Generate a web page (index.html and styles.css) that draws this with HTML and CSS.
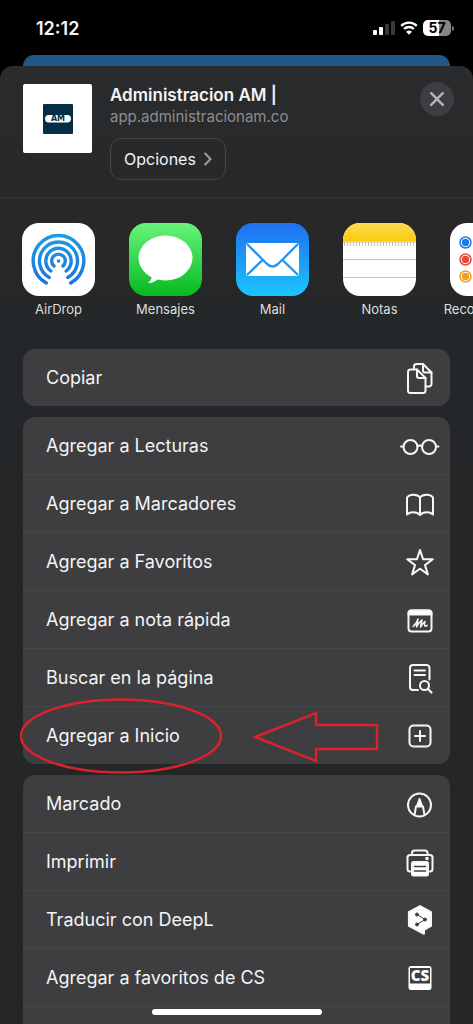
FILE: index.html
```html
<!DOCTYPE html>
<html lang="es">
<head>
    <meta charset="UTF-8">
    <meta name="viewport" content="width=device-width, initial-scale=1.0">
    <title>Compartir</title>
    <link rel="stylesheet" href="styles.css">
</head>
<body>
    <div class="status-bar">
        <span class="time">12:12</span>
        <div class="status-icons">
            <svg class="signal" width="22" height="14" viewBox="0 0 22 14">
                <rect x="0" y="9" width="4" height="5" rx="1" fill="#fff"/>
                <rect x="6" y="6" width="4" height="8" rx="1" fill="#fff"/>
                <rect x="12" y="3" width="4" height="11" rx="1" fill="#3a3a3a"/>
                <rect x="18" y="0" width="4" height="14" rx="1" fill="#3a3a3a"/>
            </svg>
            <svg class="wifi" width="18" height="14" viewBox="0 0 18 14">
                <path d="M1.2 4.8a11.2 11.2 0 0 1 15.6 0M4.1 8a7 7 0 0 1 9.8 0" fill="none" stroke="#fff" stroke-width="2.4"/>
                <path d="M9 13.8l-2.9-3a4.2 4.2 0 0 1 5.8 0z" fill="#fff"/>
            </svg>
            <div class="battery"><span class="battery-level">57</span></div>
        </div>
    </div>

    <div class="page-behind"></div>

    <main class="sheet">
        <header class="sheet-header">
            <div class="site-icon">
                <svg width="30" height="30" viewBox="0 0 30 30">
                    <rect width="30" height="30" rx="1" fill="#062f45"/>
                    <rect x="2" y="11" width="26" height="7.500" rx="3.700" fill="#fff"/>
                    <text x="15" y="17.300" text-anchor="middle" class="logo-text">AM</text>
                </svg>
            </div>
            <div class="site-info">
                <h1>Administracion AM |</h1>
                <p>app.administracionam.co</p>
                <button class="options" type="button">
                    Opciones
                    <svg width="8" height="14" viewBox="0 0 8 14"><path d="M1.2 1.5L6.5 7l-5.3 5.5" fill="none" stroke="#98989c" stroke-width="2.2" stroke-linecap="round" stroke-linejoin="round"/></svg>
                </button>
            </div>
            <button class="close" type="button" aria-label="Cerrar">
                <svg width="14" height="14" viewBox="0 0 14 14"><path d="M1.2 1.2l11.6 11.6M12.8 1.2L1.2 12.8" stroke="#b4b4b8" stroke-width="2.4" stroke-linecap="round"/></svg>
            </button>
        </header>

        <!-- Apps -->
        <div class="apps">
            <button class="app" type="button">
                <svg class="app-icon" viewBox="0 0 73 73">
                    <defs>
                        <linearGradient id="airdrop" x1="0" y1="11" x2="0" y2="62" gradientUnits="userSpaceOnUse">
                            <stop offset="0" stop-color="#1a9fe3"/>
                            <stop offset="1" stop-color="#2070e0"/>
                        </linearGradient>
                    </defs>
                    <rect width="73" height="73" rx="17" fill="#fff"/>
                    <g fill="none" stroke="url(#airdrop)" stroke-width="3.400" stroke-linecap="round">
                        <path d="M24.3 60a25.3 25.3 0 1 1 24.4 0"/>
                        <path d="M27.2 54.5a19 19 0 1 1 18.6 0"/>
                        <path d="M28.8 48a12.7 12.7 0 1 1 15.4 0"/>
                        <path d="M32 43a6.8 6.8 0 1 1 9 0"/>
                    </g>
                    <circle cx="36.500" cy="38" r="1.800" fill="#1d88e2"/>
                </svg>
                <span>AirDrop</span>
            </button>
            <button class="app" type="button">
                <svg class="app-icon" viewBox="0 0 73 73">
                    <defs>
                        <linearGradient id="messages" x1="0" y1="0" x2="0" y2="1">
                            <stop offset="0" stop-color="#68f47c"/>
                            <stop offset="1" stop-color="#06b91f"/>
                        </linearGradient>
                    </defs>
                    <rect width="73" height="73" rx="17" fill="url(#messages)"/>
                    <ellipse cx="36.500" cy="35" rx="27" ry="22.500" fill="#fff"/>
                    <path d="M23 52c0 3.500-1.500 6-4 8 4.500 0 8.500-2 11-5z" fill="#fff"/>
                </svg>
                <span>Mensajes</span>
            </button>
            <button class="app" type="button">
                <svg class="app-icon" viewBox="0 0 73 73">
                    <defs>
                        <linearGradient id="mail" x1="0" y1="0" x2="0" y2="1">
                            <stop offset="0" stop-color="#216ff1"/>
                            <stop offset="1" stop-color="#1bc5fb"/>
                        </linearGradient>
                    </defs>
                    <rect width="73" height="73" rx="17" fill="url(#mail)"/>
                    <rect x="10" y="20" width="53" height="33" rx="2.500" fill="#fff"/>
                    <path d="M11 21l20 20q5.500 5 11 0l20-20M11 52l16-15.500M62 52L46 36.500" fill="none" stroke="#2a94f0" stroke-width="2.400"/>
                </svg>
                <span>Mail</span>
            </button>
            <button class="app" type="button">
                <svg class="app-icon" viewBox="0 0 73 73">
                    <defs>
                        <linearGradient id="notes" x1="0" y1="0" x2="0" y2="1">
                            <stop offset="0" stop-color="#fddd52"/>
                            <stop offset="1" stop-color="#fcc90c"/>
                        </linearGradient>
                    </defs>
                    <rect width="73" height="73" rx="17" fill="#fff"/>
                    <path d="M0 18v-1A17 17 0 0 1 17 0h39a17 17 0 0 1 17 17v1z" fill="url(#notes)"/>
                    <path d="M0 19h73" stroke="#b9a877"/>
                    <path d="M1 21.500h71" stroke="#aaa" stroke-width="2" stroke-dasharray="1 2"/>
                    <path d="M0 36.500h73M0 54.500h73" stroke="#c4c4c6"/>
                </svg>
                <span>Notas</span>
            </button>
            <button class="app" type="button">
                <svg class="app-icon" viewBox="0 0 73 73">
                    <rect width="73" height="73" rx="17" fill="#fff"/>
                    <g fill="none" stroke-width="1.500">
                        <circle cx="15.500" cy="19.500" r="5.500" stroke="#1a7be6"/>
                        <circle cx="15.500" cy="36.500" r="5.500" stroke="#e8483f"/>
                        <circle cx="15.500" cy="53.500" r="5.500" stroke="#f19d1f"/>
                    </g>
                    <circle cx="15.500" cy="19.500" r="3.700" fill="#1a7be6"/>
                    <circle cx="15.500" cy="36.500" r="3.700" fill="#e8483f"/>
                    <circle cx="15.500" cy="53.500" r="3.700" fill="#f19d1f"/>
                    <path d="M27 19.500h38M27 36.500h38M27 53.500h38" stroke="#d0d0d2"/>
                </svg>
                <span>Recordatorios</span>
            </button>
        </div>

        <!-- Actions -->
        <div class="actions">
            <ul class="group">
                <li>
                    <button class="row" type="button">Copiar
                        <svg class="icon" viewBox="0 0 40 40">
                            <path d="M14 11V8.500a2.500 2.500 0 0 1 2.500-2.500H23l8.500 8.500V26a2.500 2.500 0 0 1-2.500 2.500h-3"/>
                            <path d="M23 6v6.500a2 2 0 0 0 2 2h6.500"/>
                            <path d="M10.500 11.500H17l8.500 8.500v12.500A2.500 2.500 0 0 1 23 35H10.500A2.500 2.500 0 0 1 8 32.500V14a2.500 2.500 0 0 1 2.500-2.500z"/>
                            <path d="M17 11.500V18a2 2 0 0 0 2 2h6.500"/>
                        </svg>
                    </button>
                </li>
            </ul>

            <ul class="group">
                <li>
                    <button class="row" type="button">Agregar a Lecturas
                        <svg class="icon" viewBox="0 0 40 40">
                            <circle cx="10.500" cy="21" r="7"/>
                            <circle cx="29" cy="21" r="7"/>
                            <path d="M1 20.500h2.500M36 20.500h2.500M17.300 20q2.500-1.200 5 0"/>
                        </svg>
                    </button>
                </li>
                <li>
                    <button class="row" type="button">Agregar a Marcadores
                        <svg class="icon" viewBox="0 0 40 40">
                            <path d="M20 13.500C17.500 10 10 9.500 7 13.500v17c3-3 10-3 13 .5 3-3.500 10-3.500 13-.5v-17c-3-4-10.500-3.500-13 0zM20 13.500V31"/>
                        </svg>
                    </button>
                </li>
                <li>
                    <button class="row" type="button">Agregar a Favoritos
                        <svg class="icon" viewBox="0 0 40 40">
                            <path d="M20 8l3.100 9.200 9.700.1-7.800 5.800 2.900 9.300L20 26.800l-7.900 5.600 2.900-9.300-7.800-5.800 9.700-.1z"/>
                        </svg>
                    </button>
                </li>
                <li>
                    <button class="row" type="button">Agregar a nota rápida
                        <svg class="icon" viewBox="0 0 40 40">
                            <rect x="8.500" y="10.500" width="23" height="21" rx="3"/>
                            <path d="M8.500 14.500v-1a3 3 0 0 1 3-3h17a3 3 0 0 1 3 3v1z" fill="#fff"/>
                            <path d="M13 26.500c2.500-2 4.500-5 5-7.500l-1.500 8c1.500-3 3.500-5.500 5.500-7l-1.500 7c1.500-2.500 3-4.500 4.500-5.500-.8 2.500-.8 4.500.3 4.700.7.100 1.300-.4 1.900-1" stroke-width="1.500"/>
                        </svg>
                    </button>
                </li>
                <li>
                    <button class="row" type="button">Buscar en la página
                        <svg class="icon" viewBox="0 0 40 40">
                            <path d="M18 32h-5a3 3 0 0 1-3-3V10a3 3 0 0 1 3-3h13.500a3 3 0 0 1 3 3v11.500M14.500 12.500h10.500M14.500 17h10.500"/>
                            <circle cx="24.500" cy="27.500" r="4.500"/>
                            <path d="M28 31l3.500 3.500" stroke-width="2.200"/>
                        </svg>
                    </button>
                </li>
                <li class="marked">
                    <button class="row" type="button">Agregar a Inicio
                        <svg class="icon" viewBox="0 0 40 40">
                            <rect x="9.500" y="9.500" width="21" height="21" rx="4"/>
                            <path d="M20 15v10M15 20h10"/>
                        </svg>
                    </button>
                    <svg class="mark-circle" width="204" height="78" viewBox="0 0 204 78">
                        <ellipse cx="102" cy="39" rx="100" ry="36.500"/>
                    </svg>
                    <svg class="mark-arrow" width="128" height="54" viewBox="0 0 128 54">
                        <path d="M3 27L64 3v12h61v24H64v12z"/>
                    </svg>
                </li>
            </ul>

            <ul class="group group-open">
                <li>
                    <button class="row" type="button">Marcado
                        <svg class="icon" viewBox="0 0 40 40">
                            <circle cx="19.500" cy="21" r="11.500"/>
                            <path d="M14.500 31l1.500-8.500h7l1.500 8.500"/>
                            <path d="M19.500 15l-2.500 7h5z" fill="#fff"/>
                        </svg>
                    </button>
                </li>
                <li>
                    <button class="row" type="button">Imprimir
                        <svg class="icon" viewBox="0 0 40 40">
                            <path d="M12 13v-2a2.500 2.500 0 0 1 2.500-2.500h10.500A2.500 2.500 0 0 1 27.500 11v2M11 29.500h-1A2.500 2.500 0 0 1 7.500 27V15.500A2.500 2.500 0 0 1 10 13h20a2.500 2.500 0 0 1 2.500 2.500V27a2.500 2.500 0 0 1-2.500 2.500h-1"/>
                            <rect x="12" y="20" width="16" height="13.500" rx="1.500" fill="#fff"/>
                            <circle cx="27" cy="16.500" r=".8" fill="#fff"/>
                            <path d="M14.500 24.500h11M14.500 29h11" stroke="#3e3e40" stroke-width="1.600"/>
                        </svg>
                    </button>
                </li>
                <li>
                    <button class="row" type="button">Traducir con DeepL
                        <svg class="icon" viewBox="0 0 40 40">
                            <path d="M20 6l11 6.200v13.600l-7 4v4L8.900 25.800V12.200z" fill="#fff"/>
                            <g stroke="#3e3e40" stroke-width="1" fill="#3e3e40">
                                <path d="M17 14.500l8 5-8 5" fill="none"/>
                                <circle cx="17" cy="14.500" r="1.500"/>
                                <circle cx="25" cy="19.500" r="1.500"/>
                                <circle cx="17" cy="24.500" r="1.500"/>
                            </g>
                        </svg>
                    </button>
                </li>
                <li>
                    <button class="row" type="button">Agregar a favoritos de CS
                        <svg class="icon" viewBox="0 0 40 40">
                            <rect x="8.500" y="8" width="23" height="24" rx="2.500" fill="#fff" stroke="none"/>
                            <rect x="10" y="10" width="20" height="15.500" fill="#3e3e40" stroke="none"/>
                            <text x="20" y="23" text-anchor="middle" class="cs-text">CS</text>
                        </svg>
                    </button>
                </li>
            </ul>
        </div>
    </main>

    <div class="home-indicator"></div>
</body>
</html>
```

FILE: styles.css
```css
* {
    box-sizing: border-box;
}

body {
    display: flex;
    flex-direction: column;
    height: 100vh;
    margin: 0;
    overflow: hidden;
    background: #000;
    color: #f4f4f5;
    font-family: Inter, 'Liberation Sans', sans-serif;
}

button {
    border: 0;
    padding: 0;
    background: none;
    color: inherit;
    font: inherit;
    cursor: pointer;
}

svg {
    display: block;
    flex-shrink: 0;
}

/* Status bar */
.status-bar {
    display: flex;
    flex-shrink: 0;
    align-items: center;
    justify-content: space-between;
    height: 56px;
    padding: 0 19px 0 36px;
    margin-bottom: -1px;
}

.time {
    font-size: 18px;
    font-weight: 600;
}

.status-icons {
    display: flex;
    align-items: center;
    gap: 5px;
}

.battery {
    display: flex;
    align-items: center;
    gap: 1px;
}

.battery::after {
    content: "";
    width: 2px;
    height: 5px;
    border-radius: 0 2px 2px 0;
    background: #777;
}

.battery-level {
    width: 28px;
    border-radius: 5px;
    background: linear-gradient(to right, #fff 57%, #858585 57%);
    color: #000;
    font-size: 14px;
    font-weight: 700;
    line-height: 16px;
    text-align: center;
}

.page-behind {
    flex-shrink: 0;
    height: 11px;
    margin: 0 23px;
    border-radius: 11px 11px 0 0;
    background: #1f5886;
}

/* Share sheet */
.sheet {
    flex: 1;
    min-height: 0;
    overflow: hidden;
    border-radius: 13px 13px 0 0;
    background: linear-gradient(#292b2d, #282828 132px, #242729 270px, #242628);
}

.sheet-header {
    display: flex;
    align-items: flex-start;
    gap: 18px;
    height: 132px;
    padding: 18px 19px 0 23px;
    border-bottom: 1px solid #333436;
}

.site-icon {
    display: flex;
    align-items: center;
    justify-content: center;
    width: 69px;
    height: 69px;
    border-radius: 2px;
    background: #fff;
}

.logo-text {
    fill: #062f45;
    font-family: 'DejaVu Sans', sans-serif;
    font-size: 8px;
    font-weight: 700;
}

.site-info {
    flex: 1;
}

h1 {
    margin: 0;
    font-size: 17px;
    font-weight: 600;
    line-height: 22px;
}

p {
    margin: 0;
    color: #8d8e92;
    font-size: 15px;
    line-height: 22px;
}

.options {
    display: flex;
    align-items: center;
    gap: 8px;
    height: 42px;
    margin-top: 10px;
    padding: 0 13px;
    border: 1px solid #434547;
    border-radius: 11px;
    font-size: 16px;
}

.close {
    display: flex;
    align-items: center;
    justify-content: center;
    width: 34px;
    height: 34px;
    margin-top: -2px;
    border-radius: 50%;
    background: #3d3e42;
}

.apps {
    display: flex;
    gap: 34px;
    padding: 25px 0 0 22px;
}

.app {
    display: flex;
    flex-direction: column;
    flex-shrink: 0;
    align-items: center;
    gap: 4px;
    width: 73px;
    font-size: 13px;
    line-height: 18px;
    color: #dededf;
}

.app-icon {
    width: 73px;
    height: 73px;
}

/* Action list */
.actions {
    display: flex;
    flex-direction: column;
    gap: 11px;
    padding: 31px 23px 0;
}

.group {
    margin: 0;
    padding: 0;
    border-radius: 12px;
    background: #3e3e40;
    list-style: none;
}

.group li + li {
    border-top: 1px solid #454547;
}

.group-open {
    padding-bottom: 57px;
}

.group-open li:last-child {
    border-bottom: 1px solid #454547;
}

.row {
    display: flex;
    align-items: center;
    justify-content: space-between;
    width: 100%;
    height: 57px;
    padding: 0 10px 0 23px;
    font-size: 18px;
    text-align: left;
}

.icon {
    width: 40px;
    height: 40px;
    fill: none;
    stroke: #f6f6f6;
    stroke-width: 2px;
    stroke-linecap: round;
    stroke-linejoin: round;
}

.cs-text {
    fill: #fff;
    stroke: none;
    font-family: 'Open Sans', sans-serif;
    font-size: 15px;
    font-weight: 800;
}

/* Red marks over the highlighted action */
.marked {
    position: relative;
}

.mark-circle,
.mark-arrow {
    position: absolute;
    fill: none;
    stroke: #d7232e;
    stroke-width: 2.5px;
    pointer-events: none;
}

.mark-circle {
    top: -10px;
    left: -4px;
}

.mark-arrow {
    top: 3px;
    left: 229px;
}

.home-indicator {
    position: fixed;
    bottom: 9px;
    left: 50%;
    width: 170px;
    height: 6px;
    margin-left: -85px;
    border-radius: 3px;
    background: #fff;
}
```
